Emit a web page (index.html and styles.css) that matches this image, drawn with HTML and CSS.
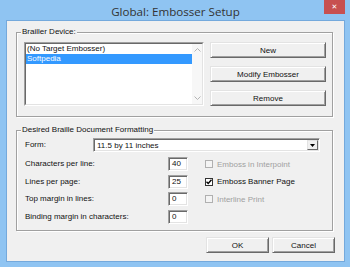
FILE: index.html
```html
<!DOCTYPE html>
<html lang="en">
<head>
    <meta charset="UTF-8">
    <meta name="viewport" content="width=device-width, initial-scale=1.0">
    <title>Global: Embosser Setup</title>
    <link rel="stylesheet" href="styles.css">
</head>
<body>
    <div class="window">
        <header class="titlebar">
            <span class="title">Global: Embosser Setup</span>
            <span class="close">&#x2715;</span>
        </header>
        <div class="client">
            <div class="group device">
                <span class="group-title">Brailler Device:</span>
                <div class="listbox">
                    <div class="listbox-inner">
                        <ul class="items">
                            <li>(No Target Embosser)</li>
                            <li class="selected">Softpedia</li>
                        </ul>
                        <div class="scrollbar">
                            <svg width="7" height="4" viewBox="0 0 7 4"><path d="M0.5 3.5 L3.5 0.5 L6.5 3.5" fill="none" stroke="#b4b4b4"/></svg>
                            <svg width="7" height="4" viewBox="0 0 7 4"><path d="M0.5 0.5 L3.5 3.5 L6.5 0.5" fill="none" stroke="#b4b4b4"/></svg>
                        </div>
                    </div>
                </div>
                <div class="side-buttons">
                    <button class="btn">New</button>
                    <button class="btn">Modify Embosser</button>
                    <button class="btn">Remove</button>
                </div>
            </div>

            <div class="group formatting">
                <span class="group-title">Desired Braille Document Formatting</span>
                <div class="form-row">
                    <span class="label form-label">Form:</span>
                    <div class="combo">
                        <span class="combo-text">11.5 by 11 inches</span>
                        <span class="combo-btn">
                            <svg width="5" height="3" viewBox="0 0 5 3"><path d="M0 0 H5 L2.5 3 Z" fill="#000"/></svg>
                        </span>
                    </div>
                </div>
                <div class="fields">
                    <span class="label">Characters per line:</span>
                    <span class="textbox">40</span>
                    <label class="check disabled"><span class="box"></span>Emboss in Interpoint</label>

                    <span class="label">Lines per page:</span>
                    <span class="textbox">25</span>
                    <label class="check"><span class="box checked">
                        <svg width="6" height="6" viewBox="0 0 6 6"><path d="M0.5 2.8 L2.2 4.5 L5.5 0.8" fill="none" stroke="#000" stroke-width="1.4"/></svg>
                    </span>Emboss Banner Page</label>

                    <span class="label">Top margin in lines:</span>
                    <span class="textbox">0</span>
                    <label class="check disabled"><span class="box"></span>Interline Print</label>

                    <span class="label">Binding margin in characters:</span>
                    <span class="textbox">0</span>
                    <span></span>
                </div>
            </div>

            <div class="dialog-buttons">
                <button class="btn">OK</button>
                <button class="btn">Cancel</button>
            </div>
        </div>
    </div>
</body>
</html>
```

FILE: styles.css
```css
* {
    margin: 0;
    padding: 0;
    box-sizing: border-box;
}
body {
    background-color: #8fc4f2;
    font-family: 'Liberation Sans', Arial, sans-serif;
    font-size: 8px;
    color: #111;
}
.window {
    width: 350px;
    height: 267px;
    background-color: #8fc4f2;
    padding: 0 5px 5px 6px;
    display: flex;
    flex-direction: column;
}
.titlebar {
    position: relative;
    height: 20px;
    display: flex;
    align-items: center;
    justify-content: center;
    padding-top: 2px;
}
.title {
    font-family: 'Open Sans', 'Liberation Sans', sans-serif;
    font-size: 11.6px;
    color: #333;
}
.close {
    position: absolute;
    top: 0;
    right: 0;
    width: 21px;
    height: 14px;
    background-color: #c75050;
    color: #fff;
    font-family: 'DejaVu Sans', sans-serif;
    font-size: 7px;
    font-weight: bold;
    display: flex;
    align-items: center;
    justify-content: center;
}
.client {
    flex: 1;
    background-color: #f0f0f0;
    border: 1px solid #74a9dc;
    display: flex;
    flex-direction: column;
}

/* group boxes */
.group {
    position: relative;
    width: 317px;
    margin-left: 9px;
    border: 1px solid #a0a0a0;
    box-shadow: inset 1px 1px 0 #fff, 1px 1px 0 #fff;
}
.group-title {
    position: absolute;
    top: -6px;
    left: 4px;
    padding: 0 1px;
    line-height: 10px;
    background-color: #f0f0f0;
}
.device {
    margin-top: 11px;
    display: flex;
    gap: 6px;
    padding: 9px 6px 10px 7px;
}
.formatting {
    margin-top: 13px;
    padding: 7px 12px 6px 8px;
}

/* list box */
.listbox {
    width: 180px;
    height: 64px;
    border: 1px solid;
    border-color: #a0a0a0 #fff #fff #a0a0a0;
}
.listbox-inner {
    height: 100%;
    display: flex;
    background-color: #fff;
    border: 1px solid;
    border-color: #696969 #e3e3e3 #e3e3e3 #696969;
}
.items {
    flex: 1;
    list-style: none;
}
.items li {
    height: 10px;
    line-height: 10px;
    padding-left: 1px;
}
.items .selected {
    background-color: #3399ff;
    color: #fff;
}
.scrollbar {
    width: 10px;
    background-color: #f7f7f7;
    display: flex;
    flex-direction: column;
    justify-content: space-between;
    align-items: center;
    padding: 4px 0 4px;
}
.scrollbar svg {
    display: block;
}

/* buttons */
.side-buttons {
    display: flex;
    flex-direction: column;
    gap: 8px;
}
.btn {
    width: 116px;
    height: 16px;
    font-family: 'Liberation Sans', Arial, sans-serif;
    font-size: 8px;
    color: #111;
    background-color: #f0f0f0;
    border: 1px solid;
    border-color: #e3e3e3 #696969 #696969 #e3e3e3;
    box-shadow: inset 1px 1px 0 #fff, inset -1px -1px 0 #a0a0a0;
}
.dialog-buttons {
    display: flex;
    justify-content: flex-end;
    gap: 3px;
    margin: 6px 9px 0 0;
}
.dialog-buttons .btn {
    width: 63px;
}

/* formatting fields */
.label {
    line-height: 14px;
}
.form-row {
    display: flex;
    height: 14px;
    margin-bottom: 5px;
}
.form-label {
    width: 68px;
}
.combo {
    flex: 1;
    display: flex;
    align-items: center;
    background-color: #fff;
    border: 1px solid;
    border-color: #a0a0a0 #fff #fff #a0a0a0;
    box-shadow: inset 1px 1px 0 #696969, inset -1px -1px 0 #e3e3e3;
}
.combo-text {
    flex: 1;
    padding-left: 3px;
}
.combo-btn {
    width: 11px;
    height: 10px;
    margin-right: 1px;
    background-color: #f0f0f0;
    border: 1px solid;
    border-color: #e3e3e3 #696969 #696969 #e3e3e3;
    display: flex;
    align-items: center;
    justify-content: center;
}
.combo-btn svg {
    display: block;
}
.fields {
    display: grid;
    grid-template-columns: 143px 20px 1fr;
    grid-template-rows: 14px 14px 14px 14px;
    row-gap: 3.7px;
}
.textbox {
    background-color: #fff;
    border: 1px solid;
    border-color: #a0a0a0 #fff #fff #a0a0a0;
    box-shadow: inset 1px 1px 0 #696969, inset -1px -1px 0 #e3e3e3;
    padding-left: 3px;
    line-height: 12px;
}
.check {
    display: flex;
    align-items: center;
    gap: 4px;
    padding-left: 17px;
}
.check.disabled {
    color: #a0a0a0;
}
.box {
    width: 8px;
    height: 8px;
    background-color: #fff;
    border: 1px solid #333;
    display: flex;
    align-items: center;
    justify-content: center;
}
.disabled .box {
    background-color: #f4f4f4;
    border-color: #b0b0b0;
}
.box svg {
    display: block;
}
```
